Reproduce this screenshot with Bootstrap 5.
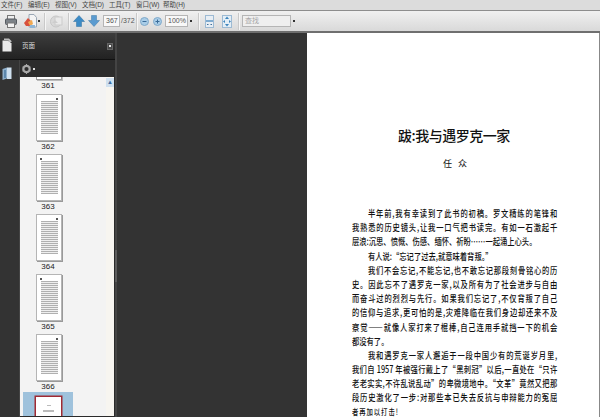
<!DOCTYPE html>
<html lang="zh"><head><meta charset="utf-8">
<link href="https://cdn.jsdelivr.net/npm/bootstrap@5.3.0/dist/css/bootstrap.min.css" rel="stylesheet">
<style>
html,body{height:417px;overflow:hidden;background:#333;font-family:"Liberation Sans","Noto Sans CJK SC",sans-serif}
.app{width:600px;height:417px;overflow:hidden}
.menubar{height:10px;background:#dcdcdc;padding-left:1px;font-size:6.5px;line-height:8px;color:#444}
.menubar span{width:27px;white-space:nowrap}
.toolbar{height:23px;background:linear-gradient(#f0f0f0,#d9d9d9);border-top:1px solid #8d8d8d;border-bottom:2px solid #6f6f6f;padding-left:5px}
.tool{display:block;flex:none}
.sep{width:1px;height:17px;background:#c9c9c9;flex:none;box-shadow:1px 0 0 #f6f6f6}
.caret-mini{width:2px;height:2px;background:#333;flex:none}
.tinput{height:12px;background:#f8f8f8;border:1px solid #b5b5b5;font-size:7px;line-height:10px;color:#555;padding-left:2px;flex:none;white-space:nowrap}
.tcount{font-size:7px;color:#555;margin-left:1px;width:12px;flex:none;white-space:nowrap}
.rail{width:20px;flex:none;background:#333}
.rail svg{display:block}
.railhead{height:27px;padding:5px 0 0 2px;background:linear-gradient(#3d3d3d,#222);border-bottom:1px solid #111}
.railnext{padding:7px 0 0 2px;border-right:1px solid #444;height:100%}
.panel{width:95px;flex:none;background:#2a2a2a}
.phead{height:27px;background:linear-gradient(#3d3d3d,#222);border-bottom:1px solid #111;font-size:6.5px;color:#ddd;padding:0 2px}
.pbtn{width:6px;height:7px;background:#4a4a4a;border:1px solid #666;display:flex;align-items:center;justify-content:center}
.pbtn i{display:block;width:2px;height:2px;background:#eee}
.ptools{height:17px;background:#2c2c2c;padding-left:2px}
.thumbs{height:339px;width:94px;background:#f3f3f3;overflow:hidden;position:relative}
.tscroll{position:absolute;right:0;top:0;bottom:0;width:8px;background:#f7f5f0}
.tscroll-btn{position:absolute;right:0;top:1px;width:8px;height:9px;background:#cfe0ef;color:#3c6ea5;font-size:6px;line-height:9px;text-align:center}
.tstub{height:4px;width:26px;margin-left:16px;margin-top:-1px;background:#fff;border:1px solid #999;border-top:0;box-shadow:1px 1px 0 #bbb}
.tlabel{height:13px;width:56px;text-align:center;font-size:8px;line-height:12px;color:#222}
.tspace{height:1px}
.tpage{width:26px;height:47px;background:#fff;border:1px solid #b5b5b5;box-shadow:1px 1px 0 #999;padding:6px 3px 6px 4px;margin-left:16px;position:relative}
.tlines{height:100%;background:repeating-linear-gradient(#b0b0b0 0 1px,#efefef 1px 2px)}
.tdot{position:absolute;top:3px;right:3px;width:2px;height:2px;background:#555}
.tdot.lft{right:auto;left:3px}
.selbg{background:#9fc2dc;width:50px;margin-left:3px;height:26px;padding:4px 0 0 12px;margin-top:-2px}
.selpage{width:27px;height:40px;background:#fff;border:1px solid #a02a33;box-shadow:0 0 0 .5px #a02a33;padding-top:8px}
.selpage i{display:block;width:11px;height:2px;margin:0 auto 4px;background:#bbb}
.selpage i.bk{width:4px;height:1px}
.splitter{width:2px;flex:none;background:#444;display:flex;flex-direction:column}
.grip{margin-top:217px;height:32px;background:#5c5c5c}
.gutter{width:190px;flex:none;background:#333}
.docpage{flex:1;height:384px;background:#fff;border-right:1px solid #888;overflow:hidden;font-family:"Noto Sans CJK SC","Liberation Serif",serif;color:#111;padding-top:93px}
.dtitle{font-size:14px;line-height:18px;letter-spacing:-.5px;margin-left:91px;width:114px;white-space:nowrap;font-weight:500}
.dauthor{font-size:9px;line-height:12px;margin-left:136px;width:24px;margin-top:14px;display:flex;justify-content:space-between}
.dbody{margin:36px 0 0 45px;width:270px;font-size:9.6px;line-height:14.2px;font-weight:500;transform:scaleX(.76);transform-origin:left top}
.dline{white-space:nowrap;text-align:justify;text-align-last:justify;height:14.2px}
.dline.ind{padding-left:21px}
.dline.end{text-align-last:left}
.dline.tail{height:12.2px;line-height:12.2px;font-size:8.4px;letter-spacing:1.2px}
</style></head><body>
<div class="app d-flex flex-column">
  <div class="menubar d-flex align-items-center">
    <span>文件(F)</span><span>编辑(E)</span><span>视图(V)</span><span>文档(D)</span><span>工具(T)</span><span>窗口(W)</span><span>帮助(H)</span>
  </div>
  <div class="toolbar d-flex align-items-center">
    <svg class="tool" width="12" height="13" viewBox="0 0 12 13"><rect x="2.500" y="0.500" width="7" height="4" fill="#eee" stroke="#777"/><rect x="0.500" y="4" width="11" height="5.500" rx="1" fill="#7c8288" stroke="#565b60"/><rect x="2.500" y="8" width="7" height="4.500" fill="#f4f4f4" stroke="#777"/></svg>
    <svg class="tool" style="margin-left:6px" width="14" height="15" viewBox="0 0 14 15"><path d="M6 .5h5l2.500 3V13H6z" fill="#f4f4f4" stroke="#9aa7b5"/><path d="M1 9 5 4l4 4-2 4H3z" fill="#d8503c"/><path d="M5 8l4-2 1 4-3 2z" fill="#f0a850"/><path d="M7 11h5v3H7z" fill="#8fb5d6"/></svg>
    <div class="caret-mini" style="margin-left:1px"></div>
    <div class="sep" style="margin-left:4px"></div>
    <svg class="tool" style="margin-left:5px" width="13" height="13" viewBox="0 0 13 13"><circle cx="6" cy="6.500" r="5.500" fill="#d8d8d8" stroke="#c6c6c6"/><rect x="5" y="2" width="7" height="8" fill="#e9e9e9" stroke="#cbcbcb"/><path d="M2 8l3-3 3 3z" fill="#cdcdcd"/></svg>
    <div class="sep" style="margin-left:5px"></div>
    <svg class="tool" style="margin-left:4px" width="12" height="12" viewBox="0 0 12 12"><path d="M6 .5 11.500 6.500H8.500V11.500H3.500V6.500H.5z" fill="#3c8bc6" stroke="#2f6f9f" stroke-width=".5"/></svg>
    <svg class="tool" style="margin-left:3px" width="12" height="12" viewBox="0 0 12 12"><path d="M6 11.500 11.500 5.500H8.500V.5H3.500V5.500H.5z" fill="#5a9bd0" stroke="#3f78a6" stroke-width=".5"/></svg>
    <div class="tinput" style="margin-left:3px;width:17px;text-align:right;padding-right:2px">367</div>
    <span class="tcount">/372</span>
    <div class="sep" style="margin-left:3px"></div>
    <svg class="tool" style="margin-left:3px" width="9" height="9" viewBox="0 0 9 9"><circle cx="4.500" cy="4.500" r="4" fill="#a9cde8" stroke="#7fa9c9"/><rect x="2.500" y="4" width="4" height="1" fill="#3a6c99"/></svg>
    <svg class="tool" style="margin-left:4px" width="9" height="9" viewBox="0 0 9 9"><circle cx="4.500" cy="4.500" r="4" fill="#a9cde8" stroke="#7fa9c9"/><path d="M2.500 4h4v1h-4zM4 2.500h1v4H4z" fill="#3a6c99"/></svg>
    <div class="tinput" style="margin-left:3px;width:23px">100%</div>
    <div class="caret-mini" style="margin-left:2px"></div>
    <div class="sep" style="margin-left:6px"></div>
    <svg class="tool" style="margin-left:6px" width="9" height="13" viewBox="0 0 9 13"><rect x=".5" y=".5" width="8" height="12" fill="#e8eef4" stroke="#9dbad3"/><rect x="1" y="5" width="7" height="2" fill="#7fabd0"/><path d="M2 9.500h1.500M5.500 9.500H7" stroke="#3f6f99"/></svg>
    <svg class="tool" style="margin-left:8px" width="10" height="13" viewBox="0 0 10 13"><rect x=".5" y=".5" width="9" height="12" fill="#e3eef6" stroke="#9dbad3"/><path d="M5 1.500 7 4H3zM5 11.500 3 9h4z" fill="#3f86bd"/><path d="M1 6.500 3 5v3zM9 6.500 7 5v3z" fill="#3f86bd"/></svg>
    <div class="sep" style="margin-left:6px"></div>
    <div class="tinput" style="margin-left:3px;width:49px;color:#a5a5a5;background:#efefef">查找</div>
    <div class="caret-mini" style="margin-left:2px"></div>
  </div>
  <div class="d-flex flex-grow-1">
    <div class="rail">
      <div class="railhead">
        <svg width="10" height="14" viewBox="0 0 10 14"><path d="M.5 2.500h6l3 3v8h-9z" fill="#e9e9e9"/><path d="M2 .5h5l2.500 2.500v1H6.500V2H2z" fill="#bdbdbd"/></svg>
      </div>
      <div class="railnext">
        <svg width="10" height="13" viewBox="0 0 10 13"><path d="M.5 2 5 .5v11L.5 13z" fill="#8fb0cc"/><path d="M5 .5h4.500V12H5z" fill="#cfe0ef"/><path d="M2 3h2v8H2z" fill="#5c86ab"/></svg>
      </div>
    </div>
    <div class="panel">
      <div class="phead d-flex align-items-center justify-content-between"><span>页面</span><div class="pbtn"><i></i></div></div>
      <div class="ptools d-flex align-items-center"><svg width="9" height="10" viewBox="0 0 9 10"><circle cx="4.500" cy="5" r="3.200" fill="none" stroke="#a8a8a8" stroke-width="2.200"/><path d="M4.500 0v2M4.500 8v2M.5 3l1.500 1M7 6l1.500 1M.5 7 2 6M7 4l1.500-1" stroke="#a8a8a8"/></svg><div class="caret-mini" style="margin-left:2px;background:#ddd"></div></div>
      <div class="thumbs">
        <div class="tscroll"></div><div class="tscroll-btn">▲</div>
        <div class="tstub"></div>
        <div class="tlabel">361</div><div class="tspace"></div>
        <div class="tpage"><span class="tdot"></span><div class="tlines"></div></div><div class="tlabel">362</div>
        <div class="tpage"><span class="tdot lft"></span><div class="tlines"></div></div><div class="tlabel">363</div>
        <div class="tpage"><span class="tdot"></span><div class="tlines"></div></div><div class="tlabel">364</div>
        <div class="tpage"><span class="tdot lft"></span><div class="tlines"></div></div><div class="tlabel">365</div>
        <div class="tpage"><span class="tdot"></span><div class="tlines"></div></div><div class="tlabel">366</div>
        <div class="selbg"><div class="selpage"><i class="bk"></i><i></i><i></i></div></div>
      </div>
    </div>
    <div class="splitter"><div class="grip"></div></div>
    <div class="gutter"></div>
    <div class="docpage">
      <div class="dtitle">跋:我与遇罗克一家</div>
      <div class="dauthor"><span>任</span><span>众</span></div>
      <div class="dbody">
        <div class="dline ind">半年前,我有幸读到了此书的初稿。罗文精练的笔锋和</div>
        <div class="dline">我熟悉的历史镜头,让我一口气把书读完。有如一石激起千</div>
        <div class="dline end">层浪:沉思、愤慨、伤感、缅怀、祈盼……一起涌上心头。</div>
        <div class="dline ind end">有人说:“忘记了过去,就意味着背叛。”</div>
        <div class="dline ind">我们不会忘记,不能忘记,也不敢忘记那段刻骨铭心的历</div>
        <div class="dline">史。因此忘不了遇罗克一家,以及所有为了社会进步与自由</div>
        <div class="dline">而奋斗过的烈烈与先行。如果我们忘记了,不仅背叛了自己</div>
        <div class="dline">的信仰与追求,更可怕的是,灾难降临在我们身边却还来不及</div>
        <div class="dline">察觉——就像人家打来了棍棒,自己连用手就挡一下的机会</div>
        <div class="dline end">都没有了。</div>
        <div class="dline ind">我和遇罗克一家人邂逅于一段中国少有的荒诞岁月里,</div>
        <div class="dline">我们自 1957 年被强行戴上了“黑刺冠”以后,一直处在“只许</div>
        <div class="dline">老老实实,不许乱说乱动”的卑微境地中。“文革”竟然又把那</div>
        <div class="dline">段历史激化了一步:对那些本已失去反抗与申辩能力的冤屈</div>
        <div class="dline end tail">者再加以打击!</div>
      </div>
    </div>
  </div>
</div>
<script src="https://cdn.jsdelivr.net/npm/bootstrap@5.3.0/dist/js/bootstrap.bundle.min.js"></script>
</body></html>
